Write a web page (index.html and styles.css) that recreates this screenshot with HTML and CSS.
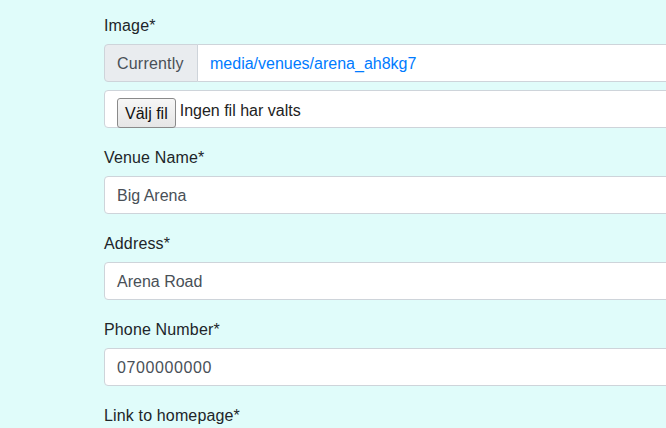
FILE: index.html
```html
<!DOCTYPE html>
<html lang="sv">
<head>
<meta charset="utf-8">
<title>Edit venue</title>
<link rel="stylesheet" href="styles.css">
</head>
<body>
<main class="page">
  <form class="venue-form">
    <div class="form-group">
      <label class="form-label">Image*</label>
      <div class="input-group">
        <span class="input-group-text">Currently</span>
        <div class="form-control current"><a href="#" class="current-link">media/venues/arena_ah8kg7</a></div>
      </div>
      <div class="form-control file-control">
        <span class="file-button">Välj fil</span>
        <span class="file-name">Ingen fil har valts</span>
      </div>
    </div>
    <div class="form-group">
      <label class="form-label">Venue Name*</label>
      <div class="form-control">Big Arena</div>
    </div>
    <div class="form-group">
      <label class="form-label">Address*</label>
      <div class="form-control">Arena Road</div>
    </div>
    <div class="form-group">
      <label class="form-label">Phone Number*</label>
      <div class="form-control digits">0700000000</div>
    </div>
    <div class="form-group">
      <label class="form-label">Link to homepage*</label>
      <div class="form-control">&nbsp;</div>
    </div>
  </form>
</main>
</body>
</html>
```
FILE: styles.css
```css
html, body {
  margin: 0;
  padding: 0;
  overflow: hidden;
  background: #e0fcfa;
}
body {
  font-family: "Liberation Sans", Arial, sans-serif;
  font-size: 16px;
  line-height: 24px;
  color: #212529;
}
.page {
  padding: 12px 0 0 104px;
}
.venue-form {
  width: 700px;
}
.form-group {
  margin-bottom: 16px;
}
.form-label {
  display: block;
  padding-top: 2px;
  margin-bottom: 6px;
  letter-spacing: 0.15px;
}
.form-control {
  box-sizing: border-box;
  height: 38px;
  padding: 7px 12px 5px;
  border: 1px solid #ced4da;
  border-radius: 4px;
  background: #fff;
  color: #495057;
  white-space: nowrap;
}
.digits {
  letter-spacing: 0.6px;
}
.input-group {
  display: flex;
  margin-bottom: 8px;
}
.input-group-text {
  box-sizing: border-box;
  width: 94px;
  height: 38px;
  padding: 7px 12px 5px;
  border: 1px solid #ced4da;
  border-radius: 4px 0 0 4px;
  background: #e9ecef;
  color: #495057;
  letter-spacing: 0.2px;
}
.current {
  flex: 1;
  margin-left: -1px;
  border-radius: 0 4px 4px 0;
}
.current-link {
  color: #007bff;
  text-decoration: none;
}
.file-control {
  display: flex;
  align-items: center;
  padding-top: 0;
  padding-bottom: 0;
  color: #222;
}
.file-button {
  box-sizing: border-box;
  height: 30px;
  margin-top: 7px;
  padding: 3px 7px 1px;
  border: 1px solid #8a8a8a;
  border-radius: 3px;
  background: linear-gradient(#f6f6f6, #e6e6e6);
  color: #111;
  line-height: 24px;
}
.file-name {
  margin-left: 4px;
  margin-top: 3px;
}
```
